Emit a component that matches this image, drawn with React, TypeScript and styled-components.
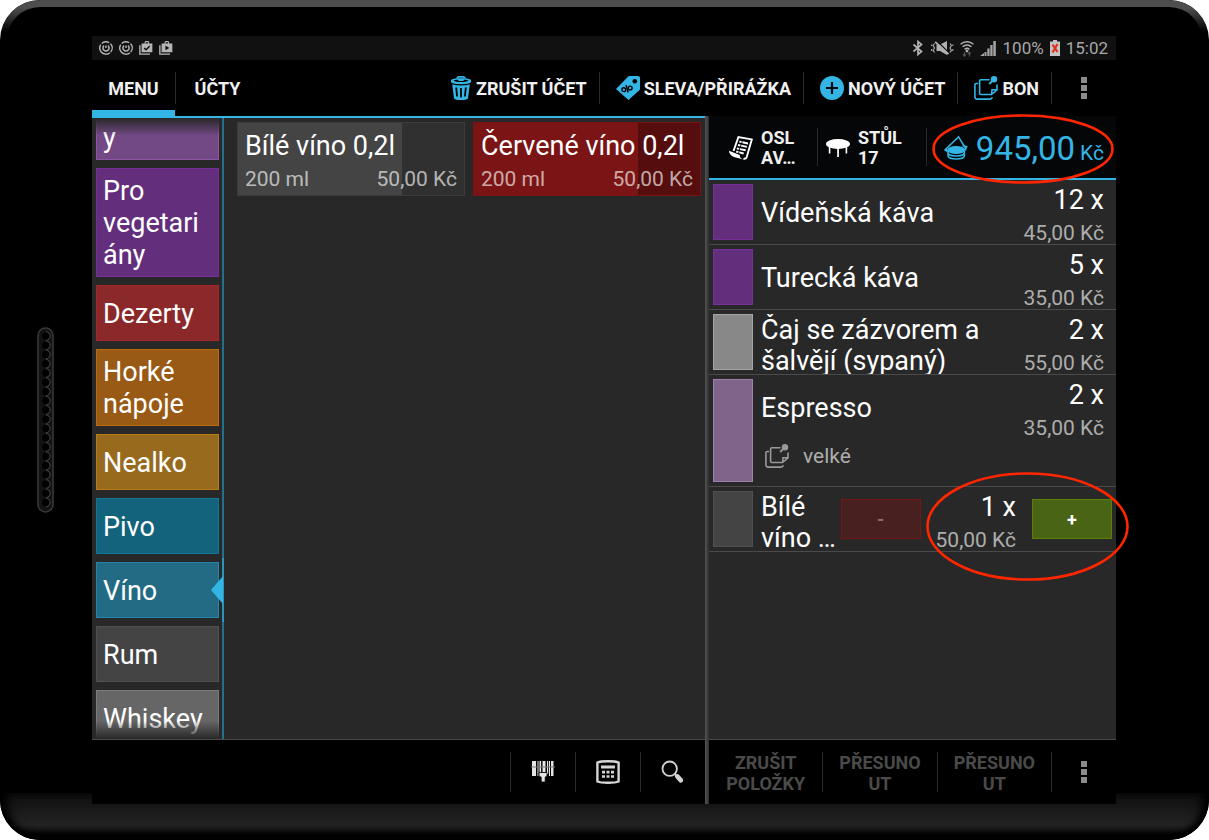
import React from 'react';
import styled, { createGlobalStyle, css } from 'styled-components';

const BLUE = '#33b5e5';

const GlobalStyle = createGlobalStyle`
  *, *::before, *::after { box-sizing: border-box; }
  body { margin: 0; background: #fff; font-family: Roboto, "Noto Sans", sans-serif; }
  button { font: inherit; color: inherit; background: none; border: 0; padding: 0; margin: 0; cursor: pointer; text-align: left; }
  svg { display: block; flex: none; }
  ul { list-style: none; margin: 0; padding: 0; }
`;

const Tablet = styled.div`
  position: relative;
  min-height: 100vh;
  display: flex;
  align-items: stretch;
  padding: 36px 0;
  border-radius: 40px;
  overflow: hidden;
  background: #000;
  &::before {
    content: '';
    position: absolute;
    inset: 0 0 auto;
    height: 80px;
    border: 7px solid #4e4e4e;
    border-bottom: 0;
    border-radius: 40px 40px 0 0;
    mask-image: linear-gradient(to bottom, #000 8px, transparent 32px);
  }
  &::after {
    content: '';
    position: absolute;
    inset: auto 0 0;
    height: 47px;
    border-radius: 0 0 40px 40px;
    background: linear-gradient(to bottom, #0c0c0c 0, #1a1a1a 18px, #232323 32px, #161616 37px, #000 43px);
    box-shadow: inset 11px 0 8px -4px #000, inset -11px 0 8px -4px #000, inset 0 -9px 7px -4px #000;
  }
`;

const Side = styled.div<{ $width: number }>`
  flex: none;
  width: ${p => p.$width}px;
  display: flex;
  align-items: center;
  justify-content: center;
  padding-right: 2px;
`;

const Screen = styled.div`
  position: relative;
  z-index: 1;
  flex: 1;
  min-width: 0;
  display: flex;
  flex-direction: column;
  background: #000;
  color: #fff;
`;

const StatusBar = styled.div`
  height: 24px;
  flex: none;
  display: flex;
  align-items: center;
  justify-content: space-between;
  padding: 0 8px 0 7px;
  background: #111;
  color: #a8a8a8;
  font-size: 17px;
`;

const StatusGroup = styled.div`
  display: flex;
  align-items: center;
  gap: 6px;
`;

const ActionBar = styled.header`
  height: 56px;
  flex: none;
  display: flex;
  align-items: stretch;
  font-size: 18px;
  font-weight: 700;
  color: #f0f0f0;
`;

const Tab = styled.button<{ $active?: boolean }>`
  min-width: 83px;
  padding: 7px 16px 0;
  text-align: center;
  border-bottom: 6px solid ${p => (p.$active ? BLUE : 'transparent')};
`;

const Spacer = styled.div`
  flex: 1;
`;

const Rule = styled.div<{ $height: number }>`
  flex: none;
  align-self: center;
  width: 1px;
  height: ${p => p.$height}px;
  background: #2b2b2b;
`;

const Action = styled.button`
  display: flex;
  align-items: center;
  gap: 4px;
  padding: 0 12px 0 16px;
  white-space: nowrap;
`;

const IconButton = styled.button`
  flex: none;
  width: 64px;
  display: flex;
  align-items: center;
  justify-content: center;
`;

const Panes = styled.main`
  flex: 1;
  display: grid;
  grid-template-columns: minmax(0, 613fr) 4px minmax(0, 407fr);
`;

const Divider = styled.div`
  background: linear-gradient(to right, #555, #2e2e2e);
`;

const Pane = styled.section`
  display: flex;
  flex-direction: column;
  min-width: 0;
`;

const Catalogue = styled.div`
  flex: 1;
  display: flex;
  border-top: 2px solid ${BLUE};
  border-bottom: 1px solid #4a4a4a;
  background: #282828;
`;

const Categories = styled.nav`
  position: relative;
  flex: none;
  width: 132px;
  height: 621px;
  overflow: hidden;
  display: flex;
  flex-direction: column;
  justify-content: flex-end;
  gap: 8px;
  padding: 0 5px 0 4px;
  background: linear-gradient(to bottom, #256f8a 440px, #2c93ba 440px, #2c93ba 504px, #256f8a 504px) right / 2px 100% no-repeat;
  &::before, &::after {
    content: '';
    position: absolute;
    left: 0;
    right: 2px;
    height: 18px;
    z-index: 1;
  }
  &::before { top: 0; background: linear-gradient(to bottom, #282828, rgba(40, 40, 40, 0)); }
  &::after { bottom: 0; background: linear-gradient(to top, #282828, rgba(40, 40, 40, 0)); }
`;

const Category = styled.button<{ $fill: string; $edge: string; $cut?: boolean; $tail?: boolean }>`
  flex: none;
  min-height: 56px;
  padding: ${p => (p.$tail ? 38 : 6)}px 6px 5px;
  background: ${p => p.$fill};
  border: 1px solid ${p => p.$edge};
  font-size: 27px;
  line-height: 32px;
  overflow-wrap: anywhere;
  ${p => p.$cut && css`margin-bottom: -7px;`}
`;

const Pointer = styled.svg`
  position: absolute;
  right: 1px;
  top: 457px;
`;

const Products = styled.div`
  flex: 1;
  display: grid;
  grid-template-columns: repeat(2, minmax(0, 1fr));
  align-content: start;
  gap: 8px;
  padding: 4px 4px 0 13px;
`;

const Product = styled.button<{ $fill: string; $rest: string; $edge: string }>`
  height: 74px;
  padding: 7px 7px 0;
  border: 1px solid ${p => p.$edge};
  background: linear-gradient(to right, ${p => p.$fill} 72.5%, ${p => p.$rest} 72.5%) border-box;
  display: flex;
  flex-direction: column;
`;

const ProductName = styled.span`
  font-size: 27px;
  line-height: 32px;
  white-space: nowrap;
`;

const ProductMeta = styled.span`
  align-self: stretch;
  display: flex;
  justify-content: space-between;
  font-size: 21px;
  line-height: 34px;
  color: rgba(255, 255, 255, 0.65);
`;

const Footer = styled.footer`
  height: 64px;
  flex: none;
  display: flex;
  align-items: stretch;
  justify-content: flex-end;
  background: #000;
`;

const BillHeader = styled.div`
  height: 64px;
  flex: none;
  display: flex;
  align-items: stretch;
  background: #040608;
  border-bottom: 2px solid ${BLUE};
`;

const BillButton = styled.button<{ $start: number }>`
  width: 108px;
  flex: none;
  display: flex;
  align-items: center;
  gap: 8px;
  padding-top: 2px;
  padding-left: ${p => p.$start}px;
  font-size: 18px;
  line-height: 20px;
  font-weight: 700;
  color: #f0f0f0;
`;

const Total = styled.div`
  position: relative;
  flex: 1;
  display: flex;
  align-items: center;
  justify-content: flex-end;
  gap: 8px;
  padding-top: 2px;
  padding-right: 12px;
  color: ${BLUE};
`;

const Amount = styled.span`
  display: flex;
  align-items: baseline;
  gap: 5px;
  font-size: 33px;
  small { font-size: 21px; }
`;

const Bill = styled.ul`
  flex: 1;
  background: #282828;
  border-bottom: 1px solid #4a4a4a;
`;

const Line = styled.li`
  position: relative;
  display: flex;
  padding: 4px;
  border-bottom: 1px solid #4a4a4a;
`;

const Swatch = styled.div<{ $fill: string; $edge: string }>`
  flex: none;
  width: 40px;
  background: ${p => p.$fill};
  border: 1px solid ${p => p.$edge};
`;

const LineBody = styled.div`
  flex: 1;
  min-width: 0;
  padding-left: 8px;
`;

const LineMain = styled.div`
  display: flex;
  height: 56px;
`;

const LineName = styled.div<{ $clip?: boolean }>`
  flex: 1;
  min-width: 0;
  height: 60px;
  padding-top: 1px;
  font-size: 27px;
  line-height: 31px;
  ${p => p.$clip && css`overflow-y: clip; overflow-x: visible;`}
`;

const NameText = styled.span<{ $single?: boolean }>`
  display: block;
  ${p => p.$single && css`line-height: 56px;`}
`;

const Quantity = styled.div<{ $inset: number }>`
  flex: none;
  display: flex;
  flex-direction: column;
  align-items: flex-end;
  padding-right: ${p => p.$inset}px;
  font-size: 27px;
  line-height: 32px;
  white-space: nowrap;
`;

const Price = styled.span`
  font-size: 21px;
  line-height: 34px;
  color: #adadad;
`;

const Modifier = styled.div`
  height: 47px;
  display: flex;
  align-items: center;
  gap: 14px;
  padding-left: 4px;
  padding-bottom: 5px;
  font-size: 21px;
  color: #adadad;
`;

const Stepper = styled.button<{ $minus?: boolean }>`
  flex: none;
  align-self: center;
  width: 80px;
  height: 40px;
  margin-right: ${p => (p.$minus ? 15 : 0)}px;
  text-align: center;
  font-size: 18px;
  font-weight: 700;
  background: ${p => (p.$minus ? '#482020' : '#486414')};
  border: 1px solid ${p => (p.$minus ? '#791414' : '#5a8006')};
  color: ${p => (p.$minus ? '#8a7070' : '#fff')};
`;

const FooterAction = styled.button`
  flex: 1;
  min-width: 0;
  padding-top: 2px;
  text-align: center;
  font-size: 18px;
  line-height: 21px;
  font-weight: 700;
  color: #4a4a4a;
`;

const Ring = styled.svg<{ $top: number; $right: number }>`
  position: absolute;
  top: ${p => p.$top}px;
  right: ${p => p.$right}px;
  z-index: 2;
  pointer-events: none;
`;

const EllipseMark = ({ w, h, top, right }: { w: number; h: number; top: number; right: number }) => (
  <Ring $top={top} $right={right} width={w} height={h} viewBox={`0 0 ${w} ${h}`} aria-hidden>
    <ellipse cx={w / 2} cy={h / 2} rx={w / 2 - 1.5} ry={h / 2 - 1.5} fill="none" stroke="#ff2600" strokeWidth="2.6" />
  </Ring>
);

const Speaker = () => (
  <svg width="17" height="186" viewBox="0 0 17 186" aria-hidden>
    <rect x="1" y="1" width="15" height="184" rx="7.5" fill="#121212" stroke="#383838" strokeWidth="1.6" />
    {Array.from({ length: 19 }, (_, i) => (
      <g key={i}>
        <circle cx="9" cy={9 + i * 9.25} r="3.8" fill="#000" />
        <path d={`M9 ${4.8 + i * 9.25}a4.2 4.2 0 0 1 0 8.4`} fill="none" stroke="#484848" strokeWidth="1" />
      </g>
    ))}
  </svg>
);

const SyncIcon = () => (
  <svg width="14" height="14" viewBox="0 0 14 14" fill="none" stroke="#b5b5b5" strokeWidth="1.4">
    <circle cx="7" cy="7" r="6.2" strokeDasharray="17 1.5 8 1.5 9 2" transform="rotate(50 7 7)" />
    <path d="M5 4.6a3.1 3.1 0 1 0 4 0" strokeWidth="1.5" />
    <path d="M7 4.5v2.5" />
  </svg>
);

const BagIcon = ({ play }: { play?: boolean }) => (
  <svg width="14" height="14" viewBox="0 0 13 13">
    <path d="M0.8 4v8.2h9.4" fill="none" stroke="#b5b5b5" strokeWidth="1.3" />
    <path d="M2.4 2.4h2.8V.9l.8-.8h2.6l.8.8v1.5h3v8H2.4z M6.2 1.2v1.2h2.2V1.2z" fill="#b5b5b5" fillRule="evenodd" />
    {play ? <path d="M6 4.2l3.6 2.2L6 8.6z" fill="#111" /> : <path d="M4.8 6.4l1.8 1.8 3.4-3.6" fill="none" stroke="#111" strokeWidth="1.3" />}
  </svg>
);

const BluetoothIcon = () => (
  <svg width="12" height="16" viewBox="0 0 12 16" fill="none" stroke="#b0b0b0" strokeWidth="1.7">
    <path d="M1.5 4.5l8 7L6 14.5v-13l3.5 3-8 7" />
  </svg>
);

const MuteIcon = () => (
  <svg width="24" height="16" viewBox="0 0 24 16">
    <path d="M6.5 4.5H10L17 1v14l-7-4H6.5z" fill="#b0b0b0" />
    <path d="M6.5.5l12 12" stroke="#111" strokeWidth="1.3" />
    <path d="M5.2 1.8l13.3 12.4" stroke="#b0b0b0" strokeWidth="1.8" />
    <path d="M4.5 3.5l-1.4 2 1.4 2.5-1.4 2.5 1.4 2M1.6 4.5V6M1.6 9v2M20 3.5l1.4 2L20 8l1.4 2.5-1.4 2M22.8 4.5V6M22.8 9v2" stroke="#b0b0b0" strokeWidth="1.1" fill="none" />
  </svg>
);

const WifiIcon = () => (
  <svg width="14" height="17" viewBox="0 0 14 17" fill="none" stroke="#b0b0b0" strokeWidth="1.5">
    <path d="M.6 4.2c3.6-3.2 9.2-3.2 12.8 0M2.6 6.8c2.5-2.3 6.3-2.3 8.8 0M4.6 9.3c1.5-1.2 3.3-1.2 4.8 0" />
    <circle cx="7" cy="11" r=".7" fill="#b0b0b0" />
    <path d="M4.4 12v4M2.9 14.4l1.5 1.8 1.5-1.8M9.4 16.5v-4M7.9 14l1.5-1.8L10.9 14" stroke="#555" strokeWidth="1.1" />
  </svg>
);

const SignalIcon = () => (
  <svg width="17" height="16" viewBox="0 0 17 16" fill="#a6a6a6">
    <path d="M0 16l4-3v3zM4.5 12h2v4h-2zM7.3 8.5h2.3V16H7.3zM10.3 5h2.3v11h-2.3zM13.3 1h2.5v15h-2.5z" />
  </svg>
);

const BatteryIcon = () => (
  <svg width="10" height="16" viewBox="0 0 10 16">
    <path d="M3 0h4v1.5h3V16H0V1.5h3z" fill="#c4c4c4" />
    <path d="M2.5 4.5l5 7.5M7.5 4l-5 8.5" stroke="#e0301a" strokeWidth="2.2" />
  </svg>
);

const TrashIcon = () => (
  <svg width="22" height="24" viewBox="0 0 22 24">
    <path d="M7.2 2.6c0-1.2.6-1.7 1.6-1.7h4.4c1 0 1.6.5 1.6 1.7" fill="none" stroke={BLUE} strokeWidth="1.8" />
    <path d="M1 4C1.8 2.8 5.5 2.2 11 2.2S20.2 2.8 21 4v2.2c-1 1.3-4.5 2-10 2S2 7.5 1 6.2z" fill={BLUE} />
    <path d="M3.5 4.7c1-.6 3-.9 4.500-1l.6 1.2h4.8l.6-1.2c1.5.1 3.5.4 4.5 1-1.5.9-4 1.3-7.5 1.3s-6-.4-7.5-1.3z" fill="#000" />
    <path d="M2.2 8.2c2 .8 5 1.2 8.8 1.2s6.8-.4 8.8-1.2L18 22.5c-1 1-3.6 1.5-7 1.5s-6-.5-7-1.5z" fill={BLUE} />
    <path d="M6.2 11.5l.9 9M11 12v9.5M15.8 11.5l-.9 9" stroke="#000" strokeWidth="1.8" />
  </svg>
);

const TagIcon = () => (
  <svg width="24" height="24" viewBox="0 0 24 24">
    <path d="M0 13L12 .8C12.5.3 13 0 13.8 0H22c1.2 0 2 .8 2 2v10.5c0 .7-.2 1.3-.7 1.8L12.5 24z" fill={BLUE} />
    <circle cx="18.8" cy="5.2" r="2.3" fill="#000" />
    <g fill="none" stroke="#000" strokeWidth="1.4">
      <circle cx="7.8" cy="13.7" r="1.9" /><circle cx="14.2" cy="12" r="1.9" /><path d="M10 9l2.2 7.5" />
    </g>
  </svg>
);

const PlusIcon = () => (
  <svg width="24" height="24" viewBox="0 0 24 24">
    <circle cx="12" cy="12" r="12" fill={BLUE} />
    <path d="M12 6v12M6 12h12" stroke="#04070a" strokeWidth="2.2" />
  </svg>
);

const NotesIcon = ({ color }: { color: string }) => (
  <svg width="24" height="24" viewBox="0 0 24 24" fill="none" stroke={color} strokeWidth="1.6">
    <path d="M15.5 3.7H6.8c-.8 0-1.2.4-1.2 1.2v12.3c0 .8.4 1.3 1.2 1.3h10.7l5.5-4.7V8.5M17.6 18.5l.4-4.7 4.8-.2" />
    <path d="M4 7.5H2.2c-.9 0-1.3.4-1.3 1.3v12c0 1.4.9 2.3 2.3 2.3H16c1.2 0 2-.6 2.3-1.8" />
    <circle cx="20" cy="3.2" r="3.2" fill={color} stroke="none" />
    <path d="M18.8 4.4L15.2 8" strokeWidth="2" />
  </svg>
);

const DotsIcon = () => (
  <svg width="6" height="22" viewBox="0 0 6 22" fill="#8a8a8a">
    <path d="M0 0h6v6H0zM0 8h6v6H0zM0 16h6v6H0z" />
  </svg>
);

const ReceiptIcon = () => (
  <svg width="24" height="24" viewBox="0 0 24 24">
    <path d="M4.5 15L9.4 1.1l13.4 2.3-5 17.4c-.6 1.6-1.8 2.2-3.4 1.8" fill="none" stroke="#fff" strokeWidth="1.9" />
    <path d="M0 14.8L10.8 19c-.2 2 1 3.8 3.8 4.4L5 21c-3-1-5-3.2-5-6.2z" fill="#fff" />
    <path d="M10.3 5.6l8.7 1.9M9 9l8.9 1.9M7.8 12.4l8.9 1.9M7.2 15.5l7.500 2" stroke="#fff" strokeWidth="1.9" strokeDasharray="2.4 .8 12" />
  </svg>
);

const TableIcon = () => (
  <svg width="24" height="24" viewBox="0 0 24 24" fill="#fff">
    <ellipse cx="12" cy="8" rx="12" ry="5" />
    <path d="M2.8 10h1.6v7.5H2.8zM11.2 12h1.7v9h-1.7zM19.6 10h1.6v7.5h-1.6z" />
  </svg>
);

const CashIcon = () => (
  <svg width="24" height="24" viewBox="0 0 24 24" fill="none" stroke={BLUE} strokeWidth="1.5">
    <path d="M3.5 15.5L.9 14 14.5.9l7.2 11.6M3 14.5L2.5 13" />
    <path d="M18.5 9.8l4.2.7-1.2 3.2-2 .3" />
    <ellipse cx="12.2" cy="14" rx="8.2" ry="3.3" fill={BLUE} />
    <path d="M4 14v3c1 4 15.4 4 16.4 0v-3M4 17v3c1 4 15.4 4 16.4 0v-3" />
  </svg>
);

const ScannerIcon = () => (
  <svg width="24" height="22" viewBox="0 0 24 22" fill="#e4e4e4">
    <path d="M1 0h4v15H1zM6.5 0h1v15h-1zM8.5 0h1.6v13H8.5zM11.5 0h3v11h-3zM16 0h1.2v13H16zM18 0h1v15h-1zM20 0h2.5v15H20z" />
    <path d="M0 5.5h24v1H0z" fill="#777" />
    <path d="M8 11.5h8V14c0 1-.6 1.6-1.8 2v5h-4v-5C8.7 15.6 8 15 8 14z" stroke="#000" strokeWidth=".8" />
  </svg>
);

const CalculatorIcon = () => (
  <svg width="24" height="24" viewBox="0 0 24 24">
    <path d="M1.4 2.5C4 1.3 8 1.2 12 1.2s8 .1 10.6 1.3v19c-2.6 1.2-6.6 1.3-10.6 1.3s-8-.1-10.6-1.3z" fill="none" stroke="#d6d6d6" strokeWidth="2.4" />
    <path d="M5 5.5h14v3H5zM6 10.7h3v2.7H6zM10.5 10.7h3v2.7h-3zM15 10.7h3v2.7h-3zM6 15.2h3v2.5H6zM10.5 15.2h3v2.5h-3zM15 15.2h3v2.5h-3z" fill="#d6d6d6" />
  </svg>
);

const SearchIcon = () => (
  <svg width="24" height="24" viewBox="0 0 24 24" fill="none" stroke="#d2d2d2">
    <circle cx="8.7" cy="8.7" r="7.2" strokeWidth="1.8" />
    <path d="M13.8 14l2 2" strokeWidth="2.2" />
    <path d="M16.3 16.4l3.6 4" strokeWidth="4.6" strokeLinecap="round" />
  </svg>
);

const categories = [
  { name: 'y', fill: '#734985', edge: '#8d55a6' },
  { name: 'Pro vegetariány', fill: '#632f7d', edge: '#772f99' },
  { name: 'Dezerty', fill: '#8b2829', edge: '#a82629' },
  { name: 'Horké nápoje', fill: '#985a14', edge: '#bc6c0c' },
  { name: 'Nealko', fill: '#976a1e', edge: '#b97d15' },
  { name: 'Pivo', fill: '#14637c', edge: '#12759a' },
  { name: 'Víno', fill: '#236b84', edge: '#2385ab' },
  { name: 'Rum', fill: '#444', edge: '#505050' },
  { name: 'Whiskey', fill: '#666', edge: '#7c7c7c' },
];

const lines = [
  { name: 'Vídeňská káva', qty: '12 x', price: '45,00 Kč', fill: '#632f7d', edge: '#772f99' },
  { name: 'Turecká káva', qty: '5 x', price: '35,00 Kč', fill: '#632f7d', edge: '#772f99' },
  { name: 'Čaj se zázvorem a šalvějí (sypaný)', qty: '2 x', price: '55,00 Kč', fill: '#888', edge: '#a5a5a5', wrap: true },
  { name: 'Espresso', qty: '2 x', price: '35,00 Kč', fill: '#806489', edge: '#a07fac', modifier: 'velké' },
];

export default function App() {
  return (
    <>
      <GlobalStyle />
      <Tablet>
        <Side $width={92}><Speaker /></Side>
        <Screen>
          <StatusBar>
            <StatusGroup><SyncIcon /><SyncIcon /><BagIcon /><BagIcon play /></StatusGroup>
            <StatusGroup>
              <BluetoothIcon /><MuteIcon /><WifiIcon /><SignalIcon />
              <span>100%</span><BatteryIcon /><span>15:02</span>
            </StatusGroup>
          </StatusBar>
          <ActionBar>
            <Tab $active>MENU</Tab>
            <Rule $height={32} />
            <Tab>ÚČTY</Tab>
            <Spacer />
            <Action><TrashIcon />ZRUŠIT ÚČET</Action>
            <Rule $height={32} />
            <Action><TagIcon />SLEVA/PŘIRÁŽKA</Action>
            <Rule $height={32} />
            <Action><PlusIcon />NOVÝ ÚČET</Action>
            <Rule $height={32} />
            <Action><NotesIcon color={BLUE} />BON</Action>
            <Rule $height={32} />
            <IconButton aria-label="Další"><DotsIcon /></IconButton>
          </ActionBar>
          <Panes>
            <Pane>
              <Catalogue>
                <Categories>
                  {categories.map((c, i) => (
                    <Category key={c.name} $fill={c.fill} $edge={c.edge} $tail={i === 0} $cut={i === categories.length - 1}>
                      {c.name}
                    </Category>
                  ))}
                  <Pointer width="12" height="30" viewBox="0 0 12 30"><path d="M12 1v28L0 15z" fill={BLUE} /></Pointer>
                </Categories>
                <Products>
                  <Product $fill="#444" $rest="#303030" $edge="#3c3c3c">
                    <ProductName>Bílé víno 0,2l</ProductName>
                    <ProductMeta><span>200 ml</span><span>50,00 Kč</span></ProductMeta>
                  </Product>
                  <Product $fill="#7b1414" $rest="#560d0d" $edge="#7d1010">
                    <ProductName>Červené víno 0,2l</ProductName>
                    <ProductMeta><span>200 ml</span><span>50,00 Kč</span></ProductMeta>
                  </Product>
                </Products>
              </Catalogue>
              <Footer>
                <Rule $height={40} />
                <IconButton aria-label="Čárový kód"><ScannerIcon /></IconButton>
                <Rule $height={40} />
                <IconButton aria-label="Kalkulačka"><CalculatorIcon /></IconButton>
                <Rule $height={40} />
                <IconButton aria-label="Hledat"><SearchIcon /></IconButton>
              </Footer>
            </Pane>
            <Divider />
            <Pane>
              <BillHeader>
                <BillButton $start={20}><ReceiptIcon /><span>OSL<br />AV…</span></BillButton>
                <Rule $height={38} />
                <BillButton $start={8}><TableIcon /><span>STŮL<br />17</span></BillButton>
                <Rule $height={38} />
                <Total>
                  <CashIcon />
                  <Amount>945,00<small>Kč</small></Amount>
                  <EllipseMark w={182} h={70} top={-2} right={2} />
                </Total>
              </BillHeader>
              <Bill>
                {lines.map(l => (
                  <Line key={l.name}>
                    <Swatch $fill={l.fill} $edge={l.edge} />
                    <LineBody>
                      <LineMain>
                        <LineName $clip={l.wrap}><NameText $single={!l.wrap}>{l.name}</NameText></LineName>
                        <Quantity $inset={8}><span>{l.qty}</span><Price>{l.price}</Price></Quantity>
                      </LineMain>
                      {l.modifier && <Modifier><NotesIcon color="#999" />{l.modifier}</Modifier>}
                    </LineBody>
                  </Line>
                ))}
                <Line>
                  <Swatch $fill="#444" $edge="#505050" />
                  <LineBody>
                    <LineMain>
                      <LineName><NameText>Bílé<br />víno …</NameText></LineName>
                      <Stepper $minus aria-label="Ubrat">-</Stepper>
                      <Quantity $inset={16}><span>1 x</span><Price>50,00 Kč</Price></Quantity>
                      <Stepper aria-label="Přidat">+</Stepper>
                    </LineMain>
                  </LineBody>
                  <EllipseMark w={203} h={109} top={-15} right={-13} />
                </Line>
              </Bill>
              <Footer>
                <FooterAction>ZRUŠIT<br />POLOŽKY</FooterAction>
                <Rule $height={40} />
                <FooterAction>PŘESUNO<br />UT</FooterAction>
                <Rule $height={40} />
                <FooterAction>PŘESUNO<br />UT</FooterAction>
                <Rule $height={40} />
                <IconButton aria-label="Další"><DotsIcon /></IconButton>
              </Footer>
            </Pane>
          </Panes>
        </Screen>
        <Side $width={93} />
      </Tablet>
    </>
  );
}
